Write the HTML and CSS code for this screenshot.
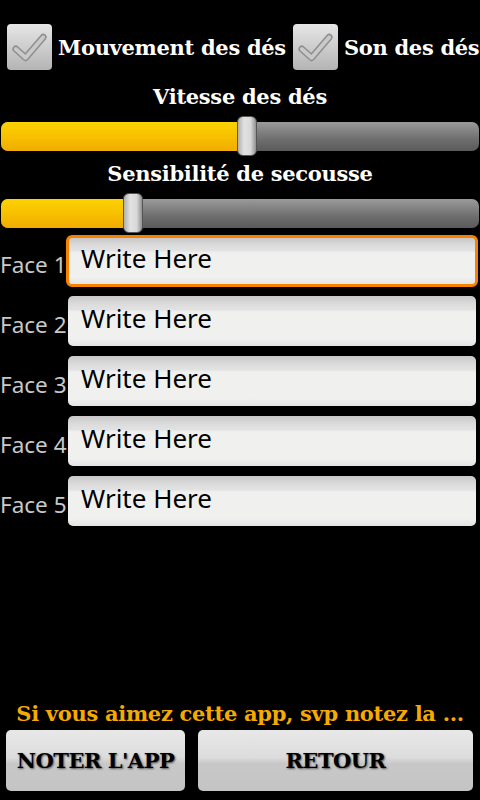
FILE: index.html
```html
<!DOCTYPE html>
<html>
<head>
<meta charset="utf-8">
<link rel="stylesheet" href="styles.css">
</head>
<body>
<div class="screen">
  <div class="checks">
    <span class="cb"><svg width="46" height="46" viewBox="0 0 46 46"><path d="M9 25 L19 34 L37 13" fill="none" stroke="#8e8e8e" stroke-width="7" stroke-linecap="round" stroke-linejoin="round"/><path d="M9 25 L19 34 L37 13" fill="none" stroke="#c9c9c9" stroke-width="4" stroke-linecap="round" stroke-linejoin="round"/></svg></span>
    <span class="cblabel">Mouvement des dés</span>
    <span class="cb"><svg width="46" height="46" viewBox="0 0 46 46"><path d="M9 25 L19 34 L37 13" fill="none" stroke="#8e8e8e" stroke-width="7" stroke-linecap="round" stroke-linejoin="round"/><path d="M9 25 L19 34 L37 13" fill="none" stroke="#c9c9c9" stroke-width="4" stroke-linecap="round" stroke-linejoin="round"/></svg></span>
    <span class="cblabel">Son des dés</span>
  </div>
  <div class="title t1">Vitesse des dés</div>
  <div class="slider">
    <div class="track"><div class="fill" style="width:237px"></div></div>
    <div class="thumb" style="left:237px"></div>
  </div>
  <div class="title t2">Sensibilité de secousse</div>
  <div class="slider">
    <div class="track"><div class="fill" style="width:124px"></div></div>
    <div class="thumb" style="left:123px"></div>
  </div>
  <div class="faces">
    <div class="row"><span class="flabel">Face 1</span><div class="edit focus">Write Here</div></div>
    <div class="row"><span class="flabel">Face 2</span><div class="edit">Write Here</div></div>
    <div class="row"><span class="flabel">Face 3</span><div class="edit">Write Here</div></div>
    <div class="row"><span class="flabel">Face 4</span><div class="edit">Write Here</div></div>
    <div class="row"><span class="flabel">Face 5</span><div class="edit">Write Here</div></div>
  </div>
  <div class="bottom">
    <div class="note">Si vous aimez cette app, svp notez la ...</div>
    <div class="buttons">
      <div class="btn b1">NOTER L'APP</div>
      <div class="btn b2">RETOUR</div>
    </div>
  </div>
</div>
</body>
</html>
```

FILE: styles.css
```css
html, body {
  margin: 0;
  padding: 0;
  background: #000;
}
.screen {
  width: 480px;
  height: 800px;
  display: flex;
  flex-direction: column;
  overflow: hidden;
  font-family: "DejaVu Serif", serif;
}
.checks {
  display: flex;
  align-items: center;
  padding: 24px 0 0 7px;
  height: 46px;
}
.cb {
  width: 45px;
  height: 46px;
  border-radius: 4px;
  background: linear-gradient(#e6e6e6, #b4b4b4);
  display: flex;
  flex-shrink: 0;
}
.cblabel {
  color: #fff;
  font-weight: bold;
  font-size: 21px;
  margin: 0 7px 0 6px;
  white-space: nowrap;
  letter-spacing: -0.3px;
}
.title {
  color: #fff;
  font-weight: bold;
  font-size: 21px;
  text-align: center;
  letter-spacing: -0.3px;
}
.t1 {
  height: 26px;
  line-height: 26px;
  margin-top: 14px;
  margin-bottom: 6px;
}
.t2 {
  height: 26px;
  line-height: 26px;
  margin-top: 5px;
  margin-bottom: 6px;
}
.slider {
  position: relative;
  height: 40px;
  display: flex;
  align-items: center;
}
.track {
  margin: 0 1px 0 1px;
  flex: 1;
  height: 29px;
  border-radius: 7px;
  background: linear-gradient(#9a9a9a, #6e6e6e 60%, #5a5a5a);
  overflow: hidden;
}
.fill {
  height: 100%;
  background: linear-gradient(#fcd200, #f8c000 50%, #f0ac00);
}
.thumb {
  position: absolute;
  top: 0;
  width: 20px;
  height: 40px;
  box-sizing: border-box;
  border-radius: 6px;
  border: 1px solid #555;
  background: linear-gradient(90deg, #b0b0b0, #e2e2e2 35%, #d8d8d8 70%, #909090);
}
.faces {
  margin-top: 2px;
  display: flex;
  flex-direction: column;
  gap: 8px;
}
.row {
  display: flex;
  align-items: center;
  height: 52px;
}
.flabel {
  width: 66px;
  color: #c8c8c8;
  font-family: "Noto Sans", sans-serif;
  font-size: 22.5px;
  white-space: nowrap;
  padding-top: 6px;
}
.edit {
  flex: 1;
  margin: 1px 4px 1px 2px;
  height: 50px;
  box-sizing: border-box;
  border-radius: 5px;
  background: linear-gradient(#c8c8c8, #dddddd 18%, #e2e2e2 27%, #f0f1ef 32%, #f0f1ef 85%, #e4e4e4);
  color: #000;
  font-family: "Noto Sans", sans-serif;
  font-size: 26px;
  padding: 6px 0 0 13px;
  line-height: 32px;
}
.edit.focus {
  margin: 0 2px 0 0;
  height: 52px;
  border: 3px solid #f88200;
  padding: 4px 0 0 12px;
  border-radius: 6px;
}
.bottom {
  margin-top: auto;
  padding-bottom: 9px;
}
.note {
  color: #f5aa00;
  font-weight: bold;
  font-size: 21px;
  text-align: center;
  height: 28px;
  line-height: 28px;
  letter-spacing: -0.3px;
}
.buttons {
  display: flex;
  padding: 2px 7px 0 6px;
  gap: 13px;
}
.btn {
  height: 61px;
  border-radius: 5px;
  background: linear-gradient(#e8e8e8, #dcdcdc 45%, #c8c8c8 55%, #c4c4c4);
  color: #000;
  font-weight: bold;
  font-size: 21px;
  display: flex;
  align-items: center;
  justify-content: center;
  text-shadow: 1px 1px 2px #555;
  letter-spacing: -0.5px;
}
.b1 { width: 179px; }
.b2 { flex: 1; }
```
